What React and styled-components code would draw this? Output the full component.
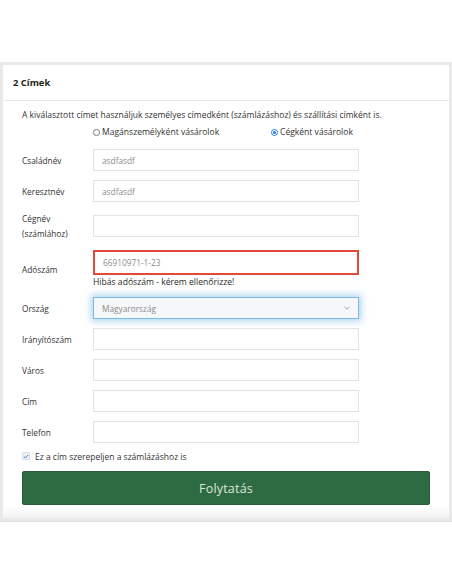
import React from 'react';
import styled, { createGlobalStyle } from 'styled-components';

const Global = createGlobalStyle`
  html, body {
    margin: 0;
    background: #fff;
    font-family: "Open Sans", "Noto Sans", sans-serif;
    color: #333;
  }
`;

const Page = styled.div`
  padding-top: 62px;
`;

const Frame = styled.div`
  background: #e9e9e9;
  padding: 3px;
  border-bottom: 1px solid #dadada;
`;

const Card = styled.div`
  background: linear-gradient(to bottom, #fff calc(100% - 12px), #f1f1f1);
`;

const Header = styled.div`
  height: 35px;
  display: flex;
  align-items: center;
  padding-left: 10px;
  border-bottom: 1px solid #e6e6e6;
  font-size: 9.4px;
  font-weight: 700;
  color: #222;
`;

const Body = styled.div`
  padding: 8px 19px 13px 19px;
`;

const Intro = styled.p`
  margin: 0;
  font-size: 8.5px;
  line-height: 11px;
  color: #333;
`;

const RadioRow = styled.div`
  display: flex;
  padding-left: 71px;
  margin-top: 6px;
  height: 12px;
  align-items: center;
`;

const RadioItem = styled.label`
  display: flex;
  align-items: center;
  gap: 2px;
  font-size: 8.55px;
  color: #333;
  width: ${p => p.w}px;
`;

const Dot = styled.span`
  width: 7px;
  height: 7px;
  border-radius: 50%;
  box-sizing: border-box;
  border: 1px solid ${p => (p.on ? '#2b7de0' : '#777')};
  background: #fff;
  display: inline-flex;
  align-items: center;
  justify-content: center;
  &::after {
    content: '';
    width: 3px;
    height: 3px;
    border-radius: 50%;
    background: ${p => (p.on ? '#2b7de0' : 'transparent')};
  }
`;

const Fields = styled.div`
  margin-top: 11px;
  display: grid;
  grid-template-columns: 71px 266px;
  row-gap: 9px;
  align-items: center;
`;

const Label = styled.div`
  font-size: 8.3px;
  line-height: 15px;
  color: #333;
`;

const Field = styled.div`
  display: flex;
  flex-direction: column;
`;

const Input = styled.div`
  box-sizing: border-box;
  height: ${p => p.h || 22}px;
  border: 1px solid ${p => (p.error ? '#e4473c' : p.focus ? '#7cb8df' : '#e3e3e3')};
  ${p => p.error && 'border-width: 2px;'}
  background: ${p => (p.focus ? '#f6f7f8' : '#fff')};
  box-shadow: ${p => (p.focus ? '0 0 7px 2px rgba(100, 180, 230, 0.55)' : 'none')};
  display: flex;
  align-items: center;
  justify-content: space-between;
  padding: 0 8px;
  font-size: 8.3px;
  color: #8c8c8c;
`;

const ErrorText = styled.div`
  font-size: 8.6px;
  color: #2a2a2a;
  margin-top: 2px;
  line-height: 11px;
`;

const Check = styled.label`
  display: flex;
  align-items: center;
  gap: 5px;
  margin-top: 7px;
  height: 12px;
  font-size: 8.5px;
  color: #333;
`;

const Box = styled.span`
  width: 8px;
  height: 8px;
  box-sizing: border-box;
  border: 1px solid #d5dde6;
  background: #eef3f8;
  border-radius: 1px;
  display: inline-flex;
  align-items: center;
  justify-content: center;
`;

const Button = styled.button`
  display: block;
  width: 100%;
  margin-top: 9px;
  height: 34px;
  border: 1px solid #2a5e3b;
  border-radius: 2px;
  background: #2e6a42;
  color: #dbe6dd;
  font-family: inherit;
  font-size: 12.5px;
  letter-spacing: 0.2px;
`;

const Chevron = () => (
  <svg width="6" height="4" viewBox="0 0 6 4">
    <path d="M0.5 0.8 L3 3.2 L5.5 0.8" fill="none" stroke="#999" strokeWidth="0.9" />
  </svg>
);

const rows = [
  { label: 'Családnév', value: 'asdfasdf' },
  { label: 'Keresztnév', value: 'asdfasdf' },
  { label: <>Cégnév<br />(számlához)</>, value: '' },
  { label: 'Adószám', value: '66910971-1-23', error: 'Hibás adószám - kérem ellenőrizze!' },
  { label: 'Ország', value: 'Magyarország', select: true },
  { label: 'Irányítószám', value: '' },
  { label: 'Város', value: '' },
  { label: 'Cím', value: '' },
  { label: 'Telefon', value: '' },
];

export default function App() {
  return (
    <Page>
      <Global />
      <Frame>
        <Card>
          <Header>2 Címek</Header>
          <Body>
            <Intro>
              A kiválasztott címet használjuk személyes címedként (számlázáshoz) és szállítási címként is.
            </Intro>
            <RadioRow>
              <RadioItem w={178}><Dot />Magánszemélyként vásárolok</RadioItem>
              <RadioItem><Dot on />Cégként vásárolok</RadioItem>
            </RadioRow>
            <Fields>
              {rows.map((r, i) => (
                <React.Fragment key={i}>
                  <Label>{r.label}</Label>
                  <Field>
                    <Input error={!!r.error} focus={r.select} h={r.error ? 25 : 22}>
                      <span>{r.value}</span>
                      {r.select && <Chevron />}
                    </Input>
                    {r.error && <ErrorText>{r.error}</ErrorText>}
                  </Field>
                </React.Fragment>
              ))}
            </Fields>
            <Check>
              <Box>
                <svg width="6" height="5" viewBox="0 0 6 5">
                  <path d="M0.8 2.6 L2.3 3.9 L5.2 1" fill="none" stroke="#3d7fd0" strokeWidth="1" />
                </svg>
              </Box>
              Ez a cím szerepeljen a számlázáshoz is
            </Check>
            <Button>Folytatás</Button>
          </Body>
        </Card>
      </Frame>
    </Page>
  );
}
